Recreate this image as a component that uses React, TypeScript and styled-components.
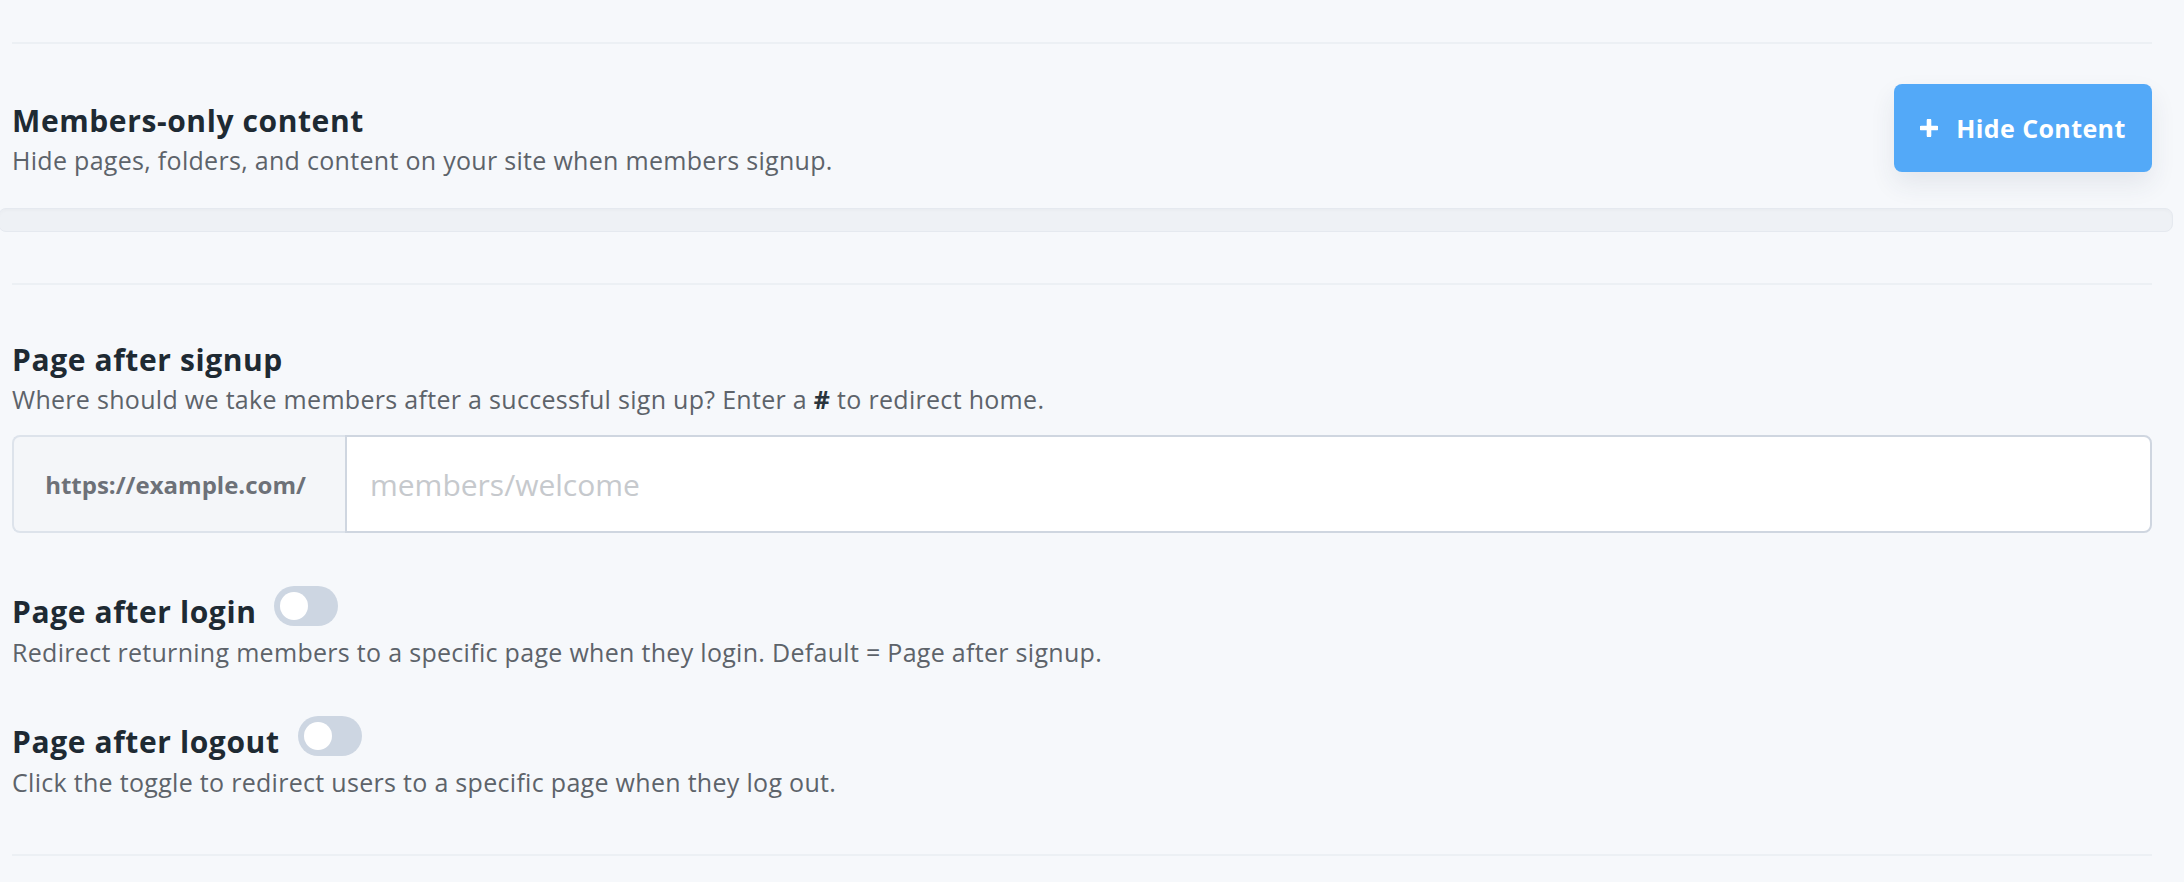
import React from "react";
import styled, { createGlobalStyle } from "styled-components";

const GlobalStyle = createGlobalStyle`
  html, body {
    margin: 0;
    padding: 0;
    background: #f6f8fb;
  }
  body {
    font-family: "Open Sans", "Noto Sans", sans-serif;
    color: #1e2a33;
  }
  * { box-sizing: border-box; }
`;

const Page = styled.div`
  width: 2184px;
  min-height: 882px;
  padding: 42px 32px 0 12px;
  background: #f6f8fb;
`;

const Divider = styled.div<{ $top?: number; $bottom?: number }>`
  height: 2px;
  background: #ecf0f4;
  margin-top: ${(p) => p.$top ?? 0}px;
  margin-bottom: ${(p) => p.$bottom ?? 0}px;
`;

const HeaderRow = styled.div`
  display: flex;
  justify-content: space-between;
  align-items: flex-start;
  padding-top: 40px;
`;

const TextBlock = styled.div<{ $top?: number }>`
  display: flex;
  flex-direction: column;
  margin-top: ${(p) => p.$top ?? 0}px;
`;

const Title = styled.h2`
  margin: 0;
  font-size: 30px;
  line-height: 36px;
  font-weight: 700;
  color: #1e2a33;
  letter-spacing: 0.6px;
`;

const Desc = styled.p<{ $top?: number }>`
  margin: ${(p) => p.$top ?? 5}px 0 0 0;
  font-size: 25px;
  line-height: 32px;
  font-weight: 400;
  color: #5d636a;
  letter-spacing: 0.3px;

  b {
    color: #2a343c;
    font-weight: 700;
  }
`;

const PrimaryButton = styled.button`
  display: flex;
  align-items: center;
  justify-content: center;
  gap: 18px;
  width: 258px;
  height: 88px;
  padding: 0;
  border: none;
  border-radius: 8px;
  background: #53a9f8;
  color: #ffffff;
  font-family: "Open Sans", sans-serif;
  font-size: 25px;
  font-weight: 700;
  letter-spacing: 0.4px;
  box-shadow: 0 12px 26px rgba(40, 60, 90, 0.09);
  cursor: pointer;
`;

const Band = styled.div`
  height: 24px;
  margin: 32px -21px 0 -14px;
  border-radius: 8px;
  background: #eef1f5;
  border: 1px solid #e5e9ef;
  box-shadow: inset 0 2px 3px rgba(0, 0, 0, 0.02);
`;

const Section = styled.div<{ $top: number }>`
  margin-top: ${(p) => p.$top}px;
`;

const InputGroup = styled.div`
  display: flex;
  height: 98px;
  margin-top: 20px;
`;

const Prefix = styled.div`
  display: flex;
  align-items: center;
  justify-content: center;
  width: 333px;
  padding-right: 8px;
  background: #f4f6f9;
  border: 2px solid #dde3eb;
  border-right: none;
  border-radius: 8px 0 0 8px;
  font-size: 24px;
  font-weight: 700;
  color: #6d7178;
`;

const TextInput = styled.input`
  flex: 1;
  min-width: 0;
  background: #ffffff;
  border: 2px solid #cfd6e0;
  border-radius: 0 8px 8px 0;
  padding: 0 0 0 23px;
  font-family: "Open Sans", sans-serif;
  font-size: 30px;
  color: #1e2a33;
  outline: none;

  &::placeholder {
    color: #c6c9cd;
  }
`;

const ToggleRow = styled.div<{ $top: number }>`
  display: flex;
  align-items: flex-end;
  gap: 18px;
  margin-top: ${(p) => p.$top}px;
`;

const Toggle = styled.div<{ $on?: boolean }>`
  position: relative;
  width: 64px;
  height: 40px;
  margin-bottom: 4px;
  border-radius: 20px;
  background: ${(p) => (p.$on ? "#53a9f8" : "#cdd6e2")};
  flex-shrink: 0;

  &::after {
    content: "";
    position: absolute;
    top: 6px;
    left: ${(p) => (p.$on ? "30px" : "6px")};
    width: 28px;
    height: 28px;
    border-radius: 50%;
    background: #ffffff;
  }
`;

const PlusIcon = () => (
  <svg width="18" height="18" viewBox="0 0 18 18" aria-hidden="true">
    <path d="M9 1.5v15M1.5 9h15" stroke="#ffffff" strokeWidth="4.6" strokeLinecap="round" />
  </svg>
);

export default function App() {
  return (
    <>
      <GlobalStyle />
      <Page>
        <Divider />
        <HeaderRow>
          <TextBlock $top={19}>
            <Title>Members-only content</Title>
            <Desc>Hide pages, folders, and content on your site when members signup.</Desc>
          </TextBlock>
          <PrimaryButton>
            <PlusIcon />
            Hide Content
          </PrimaryButton>
        </HeaderRow>
        <Band />
        <Divider $top={51} />

        <Section $top={57}>
          <Title>Page after signup</Title>
          <Desc>
            Where should we take members after a successful sign up? Enter a <b>#</b> to redirect home.
          </Desc>
          <InputGroup>
            <Prefix>https://example.com/</Prefix>
            <TextInput placeholder="members/welcome" />
          </InputGroup>
        </Section>

        <ToggleRow $top={53}>
          <Title>Page after login</Title>
          <Toggle />
        </ToggleRow>
        <Desc $top={6}>Redirect returning members to a specific page when they login. Default = Page after signup.</Desc>

        <ToggleRow $top={48}>
          <Title>Page after logout</Title>
          <Toggle />
        </ToggleRow>
        <Desc $top={6}>Click the toggle to redirect users to a specific page when they log out.</Desc>

        <Divider $top={56} />
      </Page>
    </>
  );
}
